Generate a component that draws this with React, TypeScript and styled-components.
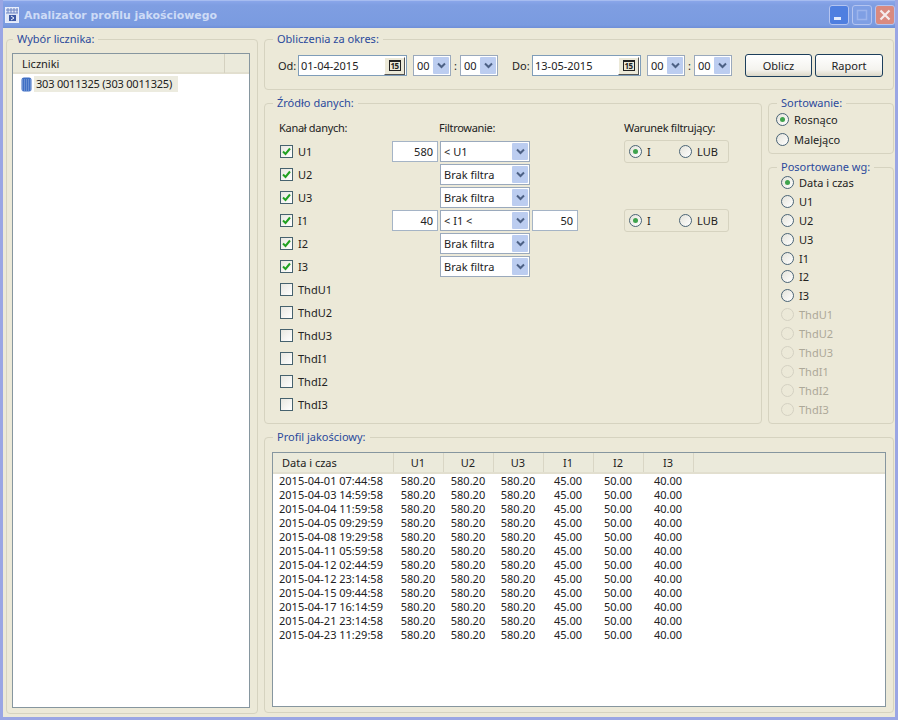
import React from "react";
import styled, { createGlobalStyle } from "styled-components";

const GlobalStyle = createGlobalStyle`
  html, body {
    margin: 0;
    padding: 0;
    background: #ece9d8;
  }
  * {
    box-sizing: border-box;
  }
`;

const Window = styled.div`
  width: 898px;
  height: 720px;
  display: flex;
  flex-direction: column;
  overflow: hidden;
  background: #ece9d8;
  border: 3px solid #9aa6e4;
  border-top: none;
  font-family: "Noto Sans", "Liberation Sans", sans-serif;
  font-size: 11px;
  color: #222;
`;

const TitleBar = styled.div`
  height: 28px;
  flex: none;
  margin: 0 -3px;
  padding: 0 3px 0 5px;
  display: flex;
  align-items: center;
  gap: 4px;
  background: linear-gradient(180deg, #8aa6ea 0, #7f9ee2 4px, #7a9be0 24px, #6f8fd8 100%),
    #7a9be0;
  border-top: 1px solid #a6bcf0;
`;

const TitleText = styled.div`
  flex: 1;
  padding-top: 2px;
  font-family: "DejaVu Sans", sans-serif;
  font-weight: bold;
  font-size: 10.9px;
  color: #cddbf6;
`;

const TitleButton = styled.div<{ $tone: string }>`
  width: 20px;
  height: 20px;
  border-radius: 3px;
  background: ${(p) => p.$tone};
  border: 1px solid #b4c4f0;
  display: flex;
  align-items: center;
  justify-content: center;
`;

const TitleButtons = styled.div`
  display: flex;
  gap: 3px;
`;

const Body = styled.div`
  flex: 1;
  min-height: 0;
  padding: 4px 1px 3px 3px;
  display: grid;
  grid-template-columns: 252px 630px;
  column-gap: 6px;
`;

const Group = styled.fieldset`
  margin: 0;
  min-width: 0;
  padding: 0 5px 5px;
  border: 1px solid #d6d3c0;
  border-radius: 4px;
  display: flex;
  flex-direction: column;
`;

const Legend = styled.legend<{ $left?: number }>`
  margin-left: ${(p) => p.$left ?? 3}px;
  padding: 0 4px;
  height: 14px;
  line-height: 14px;
  color: #2b4a9c;
`;

const RightColumn = styled.div`
  display: grid;
  grid-template-rows: 58px 328px 283px;
  row-gap: 6px;
`;

const PeriodRow = styled.div`
  display: flex;
  align-items: center;
  height: 23px;
  margin-top: 8px;
  padding-left: 8px;
`;

const FieldLabel = styled.span<{ $width: number; $left?: number }>`
  width: ${(p) => p.$width}px;
  padding-left: ${(p) => p.$left ?? 0}px;
  flex: none;
`;

const Colon = styled.span`
  width: 9px;
  flex: none;
  text-align: center;
`;

const DateBox = styled.div`
  width: 109px;
  height: 21px;
  flex: none;
  border: 1px solid #7f9db9;
  background: #fff;
  padding: 0 1px 0 2px;
  display: flex;
  align-items: center;
  justify-content: space-between;
`;

const CalendarButton = styled.div`
  width: 21px;
  height: 18px;
  background: #ece9d8;
  border: 1px solid;
  border-color: #fff #555 #555 #fff;
  display: flex;
  align-items: center;
  justify-content: center;
`;

const CalendarGlyph = styled.span`
  width: 12px;
  height: 11px;
  border: 1px solid #222;
  border-top-width: 2px;
  font-size: 8px;
  font-weight: bold;
  line-height: 8px;
  text-align: center;
  letter-spacing: -0.5px;
`;

const Combo = styled.div<{ $width: number }>`
  width: ${(p) => p.$width}px;
  height: 21px;
  flex: none;
  border: 1px solid #9aa9bc;
  background: #fff;
  padding: 0 1px 0 3px;
  display: flex;
  align-items: center;
  justify-content: space-between;
`;

const ComboArrow = styled.div`
  width: 16px;
  height: 17px;
  border-radius: 1px;
  background: #bccdf0;
  display: flex;
  align-items: center;
  justify-content: center;
`;

const HourCombos = styled.div<{ $left: number }>`
  display: flex;
  align-items: center;
  margin-left: ${(p) => p.$left}px;
`;

const ActionButton = styled.button<{ $width: number }>`
  width: ${(p) => p.$width}px;
  height: 23px;
  flex: none;
  padding: 0;
  border: 1px solid #1d3f5c;
  border-radius: 3px;
  background: linear-gradient(180deg, #ffffff 0%, #f4f3ee 70%, #dcd8c8 100%);
  font: inherit;
  color: #222;
`;

const ActionButtons = styled.div`
  display: flex;
  gap: 3px;
  margin-left: 13px;
`;

const SourceRow = styled.div`
  display: grid;
  grid-template-columns: 498px 126px;
  column-gap: 6px;
`;

const SourceGrid = styled.div`
  display: grid;
  grid-template-columns: 110px 46px 90px 46px 105px;
  column-gap: 2px;
  grid-auto-rows: 23px;
  padding: 7px 0 0 10px;
  align-items: center;
  justify-items: start;
`;

const HeaderLabel = styled.div<{ $column: number; $left?: number }>`
  grid-column: ${(p) => p.$column};
  margin: -2px 0 0 ${(p) => p.$left ?? -1}px;
  letter-spacing: -0.3px;
  white-space: nowrap;
`;

const CheckRow = styled.label`
  grid-column: 1;
  display: flex;
  align-items: center;
  gap: 5px;
`;

const CheckBox = styled.span`
  width: 13px;
  height: 13px;
  flex: none;
  border: 1px solid #46626e;
  background: linear-gradient(135deg, #e8e7e0, #ffffff);
  display: flex;
  align-items: center;
  justify-content: center;
`;

const NumberInput = styled.div<{ $column: number }>`
  grid-column: ${(p) => p.$column};
  width: 46px;
  height: 21px;
  border: 1px solid #a5b4c6;
  background: #fff;
  text-align: right;
  line-height: 19px;
  padding-right: 4px;
`;

const FilterCombo = styled(Combo)`
  grid-column: 3;
`;

const ConditionBox = styled.div`
  grid-column: 5;
  width: 105px;
  height: 23px;
  margin-left: 44px;
  border: 1px solid #d6d3c0;
  border-radius: 3px;
  padding-left: 4px;
  display: grid;
  grid-template-columns: 50px 50px;
  align-items: center;
`;

const RadioRow = styled.div<{ $disabled?: boolean }>`
  display: flex;
  align-items: center;
  gap: 5px;
  color: ${(p) => (p.$disabled ? "#aca899" : "inherit")};
`;

const RadioCircle = styled.span<{ $checked?: boolean; $disabled?: boolean }>`
  width: 13px;
  height: 13px;
  flex: none;
  border-radius: 50%;
  border: 1px solid ${(p) => (p.$disabled ? "#d4d1c2" : "#4a6476")};
  background: ${(p) =>
    p.$disabled ? "#ece9d8" : "linear-gradient(135deg, #e4e3da, #ffffff)"};
  display: flex;
  align-items: center;
  justify-content: center;

  &::after {
    content: "";
    width: 5px;
    height: 5px;
    border-radius: 50%;
    background: ${(p) => (p.$checked ? "#3fa34d" : "transparent")};
  }
`;

const SortColumn = styled.div`
  display: grid;
  grid-template-rows: 58px 264px;
  row-gap: 6px;
`;

const RadioStack = styled.div<{ $step: number; $indent: number }>`
  display: grid;
  grid-auto-rows: ${(p) => p.$step}px;
  align-items: center;
  margin-top: -1px;
  padding-left: ${(p) => p.$indent}px;
`;

const ListPanel = styled.div`
  flex: 1;
  min-height: 0;
  margin: 7px 2px 0 0;
  border: 1px solid #86969f;
  background: #fff;
`;

const ProfilePanel = styled(ListPanel)`
  margin: 8px 2px 0;
`;

const TreeHeader = styled.div`
  height: 20px;
  display: grid;
  grid-template-columns: 212px 1fr;
  background: #ebeadb;
  border-bottom: 2px solid #e2dfcf;
`;

const TreeHeaderCell = styled.div`
  padding-left: 9px;
  line-height: 19px;
  border-right: 1px solid #d4d1c0;
`;

const TreeItem = styled.div`
  margin: 2px 0 0 8px;
  display: flex;
  align-items: center;
  gap: 2px;
`;

const TreeLabel = styled.span`
  background: #ecebdf;
  height: 16px;
  line-height: 16px;
  padding: 0 6px 0 2px;
  letter-spacing: -0.2px;
`;

const Table = styled.table`
  border-collapse: collapse;
  table-layout: fixed;
  width: 100%;
`;

const HeadCell = styled.th<{ $first?: boolean; $width?: number }>`
  width: ${(p) => (p.$width ? `${p.$width}px` : "auto")};
  height: 20px;
  padding: 0 0 0 ${(p) => (p.$first ? 9 : 0)}px;
  font-weight: normal;
  text-align: ${(p) => (p.$first ? "left" : "center")};
  background: #ebeadb;
  border-bottom: 2px solid #e2dfcf;
  border-right: 1px solid #d9d6c5;

  &:last-child {
    border-right: none;
  }
`;

const RowSpacer = styled.tr`
  height: 1px;
`;

const DataRow = styled.tr`
  height: 14px;
`;

const DataCell = styled.td<{ $first?: boolean }>`
  padding: 0 0 0 ${(p) => (p.$first ? 6 : 0)}px;
  line-height: 14px;
  text-align: ${(p) => (p.$first ? "left" : "center")};
  white-space: nowrap;
`;

const Chevron = () => (
  <svg width="9" height="7" viewBox="0 0 9 7">
    <path d="M1 1.5 L4.5 5 L8 1.5" fill="none" stroke="#4d6185" strokeWidth="2" />
  </svg>
);

const Check = () => (
  <svg width="9" height="9" viewBox="0 0 9 9">
    <path d="M1 4.5 L3.5 7 L8 1.5" fill="none" stroke="#21a121" strokeWidth="2" />
  </svg>
);

const AppIcon = () => (
  <svg width="15" height="16" viewBox="0 0 15 16">
    <rect x="0.5" y="0.5" width="13" height="15" fill="#dfe6f6" stroke="#e8eefc" />
    <path d="M3 1v5M6 1v5M9 1v5M12 1v5M1 3h12M1 6h12" stroke="#6f86c4" />
    <path d="M4 8h7v6H4z" fill="#3e5aa4" />
    <path d="M6 9l3 2-3 2" fill="none" stroke="#e8eefc" />
  </svg>
);

const MeterIcon = () => (
  <svg width="11" height="15" viewBox="0 0 11 15">
    <rect x="0.5" y="0.5" width="10" height="14" rx="2.5" fill="#3f6fc4" />
    <path
      d="M1 3h9M1 5h9M1 7h9M1 9h9M1 11h9M1 13h9"
      stroke="#a9c2ea"
      strokeWidth="0.8"
      strokeDasharray="1 1"
    />
  </svg>
);

const TimeCombo = () => (
  <Combo $width={38}>
    00
    <ComboArrow>
      <Chevron />
    </ComboArrow>
  </Combo>
);

const TimePair = ({ left }: { left: number }) => (
  <HourCombos $left={left}>
    <TimeCombo />
    <Colon>:</Colon>
    <TimeCombo />
  </HourCombos>
);

const DateField = ({ value }: { value: string }) => (
  <DateBox>
    {value}
    <CalendarButton>
      <CalendarGlyph>15</CalendarGlyph>
    </CalendarButton>
  </DateBox>
);

const Condition = () => (
  <ConditionBox>
    <RadioRow>
      <RadioCircle $checked />I
    </RadioRow>
    <RadioRow>
      <RadioCircle />
      LUB
    </RadioRow>
  </ConditionBox>
);

type Channel = {
  name: string;
  checked: boolean;
  filter?: string;
  low?: string;
  high?: string;
  condition?: boolean;
};

const channels: Channel[] = [
  { name: "U1", checked: true, filter: "< U1", low: "580", condition: true },
  { name: "U2", checked: true, filter: "Brak filtra" },
  { name: "U3", checked: true, filter: "Brak filtra" },
  { name: "I1", checked: true, filter: "< I1 <", low: "40", high: "50", condition: true },
  { name: "I2", checked: true, filter: "Brak filtra" },
  { name: "I3", checked: true, filter: "Brak filtra" },
  { name: "ThdU1", checked: false },
  { name: "ThdU2", checked: false },
  { name: "ThdU3", checked: false },
  { name: "ThdI1", checked: false },
  { name: "ThdI2", checked: false },
  { name: "ThdI3", checked: false },
];

const sortKeys = ["Data i czas", "U1", "U2", "U3", "I1", "I2", "I3"];
const disabledKeys = ["ThdU1", "ThdU2", "ThdU3", "ThdI1", "ThdI2", "ThdI3"];

const columns = ["U1", "U2", "U3", "I1", "I2", "I3"];
const values = ["580.20", "580.20", "580.20", "45.00", "50.00", "40.00"];
const dates = [
  "2015-04-01 07:44:58",
  "2015-04-03 14:59:58",
  "2015-04-04 11:59:58",
  "2015-04-05 09:29:59",
  "2015-04-08 19:29:58",
  "2015-04-11 05:59:58",
  "2015-04-12 02:44:59",
  "2015-04-12 23:14:58",
  "2015-04-15 09:44:58",
  "2015-04-17 16:14:59",
  "2015-04-21 23:14:58",
  "2015-04-23 11:29:58",
];

const App: React.FC = () => {
  return (
    <Window>
      <GlobalStyle />
      <TitleBar>
        <AppIcon />
        <TitleText>Analizator profilu jakościowego</TitleText>
        <TitleButtons>
          <TitleButton $tone="#4f7fe0">
            <svg width="12" height="12" viewBox="0 0 12 12">
              <rect x="1" y="8" width="7" height="3" fill="#e4ecfc" />
            </svg>
          </TitleButton>
          <TitleButton $tone="#7f9fe4">
            <svg width="12" height="12" viewBox="0 0 12 12">
              <rect x="1.5" y="1.5" width="9" height="9" fill="none" stroke="#9cb4ec" strokeWidth="1.5" />
            </svg>
          </TitleButton>
          <TitleButton $tone="#d98a80">
            <svg width="12" height="12" viewBox="0 0 12 12">
              <path d="M1.5 1.5l9 9M10.5 1.5l-9 9" stroke="#f6ecec" strokeWidth="2.2" />
            </svg>
          </TitleButton>
        </TitleButtons>
      </TitleBar>
      <Body>
        <Group>
          <Legend $left={1}>Wybór licznika:</Legend>
          <ListPanel>
            <TreeHeader>
              <TreeHeaderCell>Liczniki</TreeHeaderCell>
            </TreeHeader>
            <TreeItem>
              <MeterIcon />
              <TreeLabel>303 0011325 (303 0011325)</TreeLabel>
            </TreeItem>
          </ListPanel>
        </Group>
        <RightColumn>
          <Group>
            <Legend>Obliczenia za okres:</Legend>
            <PeriodRow>
              <FieldLabel $width={20}>Od:</FieldLabel>
              <DateField value="01-04-2015" />
              <TimePair left={6} />
              <FieldLabel $width={34} $left={14}>
                Do:
              </FieldLabel>
              <DateField value="13-05-2015" />
              <TimePair left={6} />
              <ActionButtons>
                <ActionButton $width={67}>Oblicz</ActionButton>
                <ActionButton $width={68}>Raport</ActionButton>
              </ActionButtons>
            </PeriodRow>
          </Group>
          <SourceRow>
            <Group>
              <Legend>Źródło danych:</Legend>
              <SourceGrid>
                <HeaderLabel $column={1}>Kanał danych:</HeaderLabel>
                <HeaderLabel $column={3}>Filtrowanie:</HeaderLabel>
                <HeaderLabel $column={5} $left={44}>
                  Warunek filtrujący:
                </HeaderLabel>
                {channels.map((c) => (
                  <React.Fragment key={c.name}>
                    <CheckRow>
                      <CheckBox>{c.checked && <Check />}</CheckBox>
                      {c.name}
                    </CheckRow>
                    {c.low && <NumberInput $column={2}>{c.low}</NumberInput>}
                    {c.filter && (
                      <FilterCombo $width={90}>
                        {c.filter}
                        <ComboArrow>
                          <Chevron />
                        </ComboArrow>
                      </FilterCombo>
                    )}
                    {c.high && <NumberInput $column={4}>{c.high}</NumberInput>}
                    {c.condition && <Condition />}
                  </React.Fragment>
                ))}
              </SourceGrid>
            </Group>
            <SortColumn>
              <Group>
                <Legend>Sortowanie:</Legend>
                <RadioStack $step={20} $indent={2}>
                  <RadioRow>
                    <RadioCircle $checked />
                    Rosnąco
                  </RadioRow>
                  <RadioRow>
                    <RadioCircle />
                    Malejąco
                  </RadioRow>
                </RadioStack>
              </Group>
              <Group>
                <Legend>Posortowane wg:</Legend>
                <RadioStack $step={18.92} $indent={7}>
                  {sortKeys.map((k, i) => (
                    <RadioRow key={k}>
                      <RadioCircle $checked={i === 0} />
                      {k}
                    </RadioRow>
                  ))}
                  {disabledKeys.map((k) => (
                    <RadioRow key={k} $disabled>
                      <RadioCircle $disabled />
                      {k}
                    </RadioRow>
                  ))}
                </RadioStack>
              </Group>
            </SortColumn>
          </SourceRow>
          <Group>
            <Legend>Profil jakościowy:</Legend>
            <ProfilePanel>
              <Table>
                <thead>
                  <tr>
                    <HeadCell $first $width={120}>
                      Data i czas
                    </HeadCell>
                    {columns.map((c) => (
                      <HeadCell key={c} $width={50}>
                        {c}
                      </HeadCell>
                    ))}
                    <HeadCell />
                  </tr>
                </thead>
                <tbody>
                  <RowSpacer />
                  {dates.map((d) => (
                    <DataRow key={d}>
                      <DataCell $first>{d}</DataCell>
                      {values.map((v, i) => (
                        <DataCell key={i}>{v}</DataCell>
                      ))}
                      <DataCell />
                    </DataRow>
                  ))}
                </tbody>
              </Table>
            </ProfilePanel>
          </Group>
        </RightColumn>
      </Body>
    </Window>
  );
};

export default App;
